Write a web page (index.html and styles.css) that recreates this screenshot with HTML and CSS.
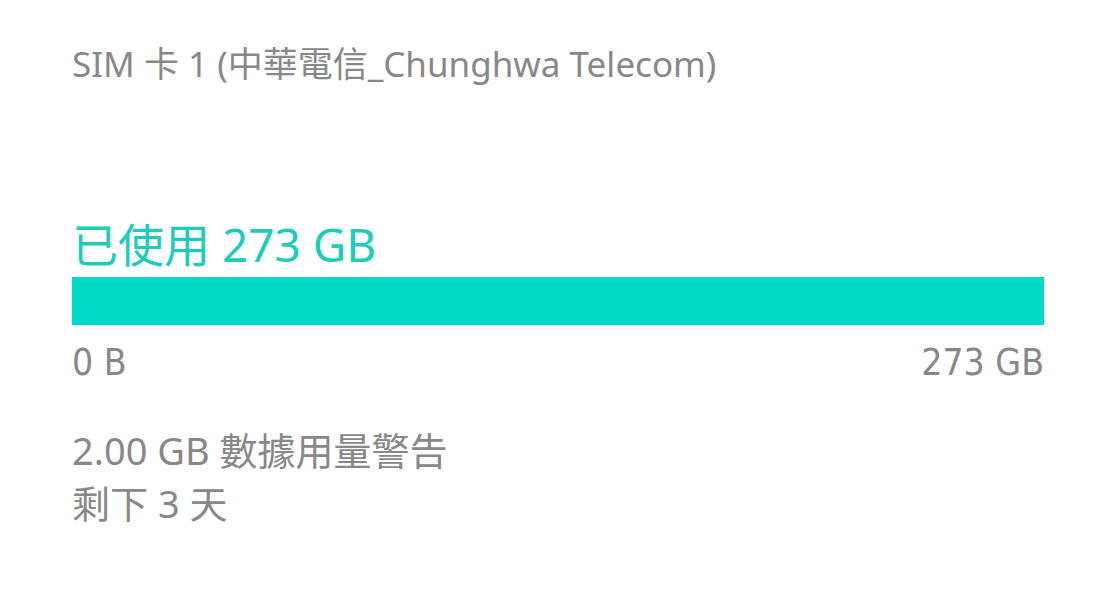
FILE: index.html
```html
<!DOCTYPE html>
<html>

<head>
  <title>SIM 卡 1</title>
  <link rel="stylesheet" href="styles.css">
</head>

<body>
  <div class="usage">
    <div class="sim">SIM 卡 1 (中華電信_Chunghwa Telecom)</div>

    <div class="used">已使用 273 GB</div>
    <div class="bar"></div>
    <div class="scale">
      <span>0 B</span>
      <span>273 GB</span>
    </div>

    <div class="info">2.00 GB 數據用量警告</div>
    <div class="info">剩下 3 天</div>
  </div>
</body>

</html>
```
FILE: styles.css
```css
html,
body {
  margin: 0;
  background-color: #ffffff;
  font-family: "Noto Sans", "Noto Sans CJK TC", sans-serif;
  color: #888888;
}

.usage {
  width: 972px;
  padding: 40px 72px 0 72px;
}

.sim {
  font-size: 35px;
  line-height: 48px;
}

.used {
  margin-top: 128px;
  font-size: 46px;
  line-height: 56px;
  color: #1ccdb9;
}

.bar {
  margin-top: 5px;
  height: 48px;
  background-color: #00d9c5;
}

.scale {
  display: flex;
  justify-content: space-between;
  margin-top: 18px;
  font-family: "DejaVu Sans Condensed", "DejaVu Sans", sans-serif;
  font-stretch: condensed;
  font-size: 37px;
  line-height: 40px;
}

.info {
  font-size: 38px;
  line-height: 53px;
}

.scale + .info {
  margin-top: 41px;
}
```
